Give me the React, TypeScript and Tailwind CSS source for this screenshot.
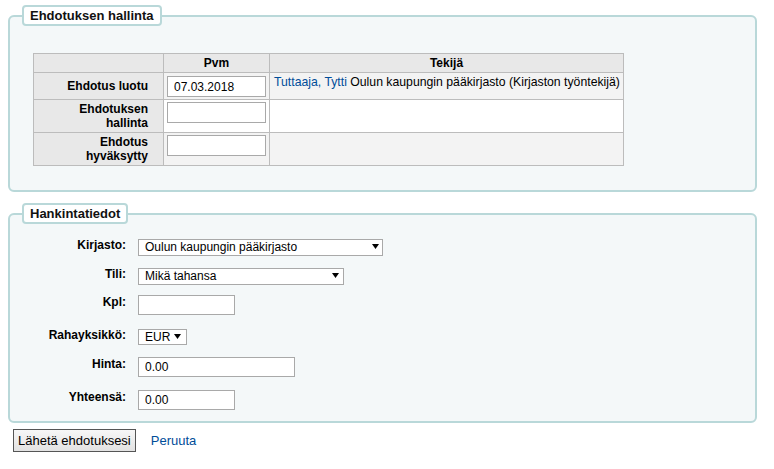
import React from 'react';

function Arrow() {
  return (
    <svg width="7" height="5" viewBox="0 0 7 5" className="block">
      <polygon points="0,0 7,0 3.5,5" fill="#000" />
    </svg>
  );
}

function FakeSelect({ value, width, height, arrowRight }: { value: string; width: string; height: string; arrowRight: string }) {
  return (
    <div className={`relative ${width} ${height}`}>
      <select
        defaultValue={value}
        className="w-full h-full appearance-none bg-white border border-[#a9a9a9] pl-[6px] text-[12px] leading-[14px] text-black outline-none"
      >
        <option>{value}</option>
      </select>
      <span className={`pointer-events-none absolute top-0 bottom-0 ${arrowRight} flex items-center`}>
        <Arrow />
      </span>
    </div>
  );
}

function TextInput({ className, value = '' }: { className: string; value?: string }) {
  return (
    <input
      type="text"
      defaultValue={value}
      className={`bg-white border border-[#a9a9a9] pl-[6px] text-[12px] text-black outline-none ${className}`}
    />
  );
}

function Legend({ children }: { children: React.ReactNode }) {
  return (
    <legend className="ml-[12px] border-2 border-[#b9d8d9] bg-white rounded-[4px] px-[6px] py-[1px] text-[13px] leading-[15px] font-bold text-[#111]">
      {children}
    </legend>
  );
}

export default function App() {
  const th = 'border border-[#bcbcbc] bg-[#e8e8e8] font-bold';
  const td = 'border border-[#bcbcbc] align-top';

  const rows: { label: string; top: string; control: React.ReactNode }[] = [
    {
      label: 'Kirjasto:',
      top: 'mt-0',
      control: <FakeSelect value="Oulun kaupungin pääkirjasto" width="w-[245px]" height="h-[17px]" arrowRight="right-[4px]" />,
    },
    {
      label: 'Tili:',
      top: 'mt-[12px]',
      control: <FakeSelect value="Mikä tahansa" width="w-[206px]" height="h-[17px]" arrowRight="right-[5px]" />,
    },
    { label: 'Kpl:', top: 'mt-[11px]', control: <TextInput className="w-[97px] h-[20px]" /> },
    {
      label: 'Rahayksikkö:',
      top: 'mt-[13px]',
      control: <FakeSelect value="EUR" width="w-[49px]" height="h-[16px]" arrowRight="right-[6px]" />,
    },
    { label: 'Hinta:', top: 'mt-[13px]', control: <TextInput className="w-[157px] h-[20px]" value="0.00" /> },
    { label: 'Yhteensä:', top: 'mt-[13px]', control: <TextInput className="w-[97px] h-[20px]" value="0.00" /> },
  ];

  return (
    <div className="w-[774px] h-[469px] overflow-hidden bg-white text-[12px] text-black font-['Liberation_Sans',Arial,sans-serif]">
      {/* Ehdotuksen hallinta */}
      <fieldset className="ml-[8px] mt-[5px] w-[749px] border-2 border-[#b9d8d9] rounded-[6px] bg-[#f4f8f9]">
        <Legend>Ehdotuksen hallinta</Legend>
        <div className="pt-[27px] pl-[23px] pb-[24px]">
          <table className="border-collapse table-fixed w-[590px]">
            <colgroup>
              <col className="w-[130px]" />
              <col className="w-[106px]" />
              <col className="w-[354px]" />
            </colgroup>
            <thead>
              <tr>
                <th className={`${th} py-[2px] leading-[14px]`}></th>
                <th className={`${th} py-[2px] leading-[14px] text-center`}>Pvm</th>
                <th className={`${th} py-[2px] leading-[14px] text-center`}>Tekijä</th>
              </tr>
            </thead>
            <tbody>
              <tr>
                <th className={`${th} text-right align-middle pl-[4px] pr-[15px] py-[2px] leading-[14px]`}>Ehdotus luotu</th>
                <td className={`${td} bg-[#f3f3f3] pt-[3px] pb-[2px] px-[3px]`}>
                  <TextInput className="w-[99px] h-[21px] block" value="07.03.2018" />
                </td>
                <td className={`${td} bg-[#f3f3f3] pt-[2px] pl-[4px] pr-0 leading-[14px] text-[12.25px] whitespace-nowrap overflow-hidden`}>
                  <a className="text-[#004d99]">Tuttaaja, Tytti</a> Oulun kaupungin pääkirjasto (Kirjaston työntekijä)
                </td>
              </tr>
              <tr>
                <th className={`${th} text-right align-middle pl-[4px] pr-[15px] py-[2px] leading-[14px]`}>Ehdotuksen hallinta</th>
                <td className={`${td} bg-white pt-[2px] px-[3px]`}>
                  <TextInput className="w-[99px] h-[21px] block" />
                </td>
                <td className={`${td} bg-white`}></td>
              </tr>
              <tr>
                <th className={`${th} text-right align-middle pl-[4px] pr-[15px] py-[2px] leading-[14px]`}>Ehdotus hyväksytty</th>
                <td className={`${td} bg-[#f3f3f3] pt-[2px] px-[3px]`}>
                  <TextInput className="w-[99px] h-[21px] block" />
                </td>
                <td className={`${td} bg-[#f3f3f3]`}></td>
              </tr>
            </tbody>
          </table>
        </div>
      </fieldset>

      {/* Hankintatiedot */}
      <fieldset className="ml-[8px] mt-[11px] w-[749px] border-2 border-[#b9d8d9] rounded-[6px] bg-[#f4f8f9]">
        <Legend>Hankintatiedot</Legend>
        <div className="pt-[14px] pb-[11px] flex flex-col">
          {rows.map((r) => (
            <div key={r.label} className={`flex items-start ${r.top}`}>
              <label className="w-[116px] text-right font-bold leading-[15px]">{r.label}</label>
              <div className="ml-[12px]">{r.control}</div>
            </div>
          ))}
        </div>
      </fieldset>

      <div className="ml-[13px] mt-[6px] flex items-center">
        <button className="h-[23px] px-[4px] border border-[#555] bg-gradient-to-b from-[#f7f7f7] to-[#e2e2e2] text-[13px] leading-[15px] text-black">
          Lähetä ehdotuksesi
        </button>
        <a className="ml-[15px] text-[13px] text-[#004d99]">Peruuta</a>
      </div>
    </div>
  );
}
